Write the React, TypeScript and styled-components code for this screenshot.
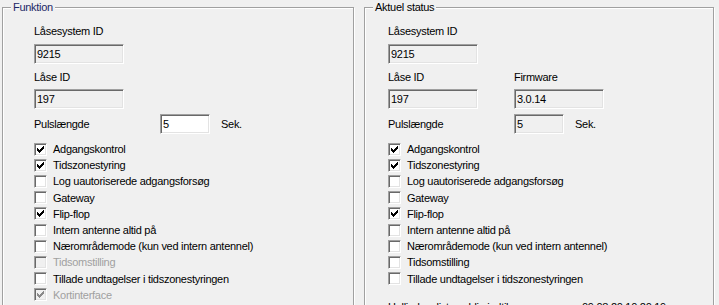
import React from 'react';
import styled, { createGlobalStyle } from 'styled-components';

const GlobalStyle = createGlobalStyle`
  body {
    margin: 0;
    background: #f0f0f0;
    font-family: "Liberation Sans", Arial, sans-serif;
    font-size: 11px;
    letter-spacing: -0.28px;
    color: #000;
    overflow: hidden;
  }
`;

const Page = styled.div`
  display: flex;
  gap: 10px;
  padding: 7px 0 0 2px;
`;

const Group = styled.section<{ $width: number; $pad: number }>`
  position: relative;
  width: ${p => p.$width}px;
  height: 330px;
  box-sizing: border-box;
  border: 1px solid #a0a0a0;
  box-shadow: inset 1px 1px 0 #fff, 1px 1px 0 #fff;
  padding: 17px 0 0 ${p => p.$pad}px;
`;

const Legend = styled.span<{ $color?: string }>`
  position: absolute;
  top: -7px;
  left: 8px;
  padding: 0 2px;
  line-height: 13px;
  background: #f0f0f0;
  color: ${p => p.$color || '#000'};
`;

const LabelRow = styled.div<{ $mt?: number }>`
  display: flex;
  height: 13px;
  line-height: 13px;
  margin-top: ${p => p.$mt || 0}px;
`;

const Label = styled.span`
  width: 126px;
  white-space: nowrap;
`;

const FieldRow = styled.div<{ $mt: number }>`
  display: flex;
  gap: 36px;
  margin-top: ${p => p.$mt}px;
`;

const TextField = styled.div<{ $width: number; $editable?: boolean }>`
  width: ${p => p.$width}px;
  height: 20px;
  box-sizing: border-box;
  border: 1px solid;
  border-color: #a0a0a0 #fff #fff #a0a0a0;
  box-shadow: inset 1px 1px 0 #696969, inset -1px -1px 0 #e3e3e3;
  background: ${p => (p.$editable ? '#fff' : '#f0f0f0')};
  padding: 0 2px;
  line-height: 18px;
`;

const PulseRow = styled.div`
  display: flex;
  align-items: center;
  margin-top: 5px;
`;

const Unit = styled.span`
  margin-left: 11px;
`;

const CheckList = styled.div`
  margin-top: 7px;
`;

const CheckRow = styled.div<{ $disabled?: boolean }>`
  display: flex;
  align-items: center;
  height: 16.2px;
  color: ${p => (p.$disabled ? '#a0a0a0' : '#000')};
`;

const Box = styled.span<{ $disabled?: boolean }>`
  display: flex;
  align-items: center;
  justify-content: center;
  width: 13px;
  height: 13px;
  box-sizing: border-box;
  border: 1px solid;
  border-color: #a0a0a0 #fff #fff #a0a0a0;
  box-shadow: inset 1px 1px 0 #696969, inset -1px -1px 0 #e3e3e3;
  background: ${p => (p.$disabled ? '#f0f0f0' : '#fff')};
  color: ${p => (p.$disabled ? '#8a8a8a' : '#000')};
`;

const CheckText = styled.span`
  margin-left: 6px;
  white-space: nowrap;
`;

const StatusRow = styled.div`
  display: flex;
  margin-top: 14px;
  line-height: 13px;
`;

const StatusLabel = styled.span`
  width: 194px;
`;

const Tick = () => (
  <svg width="7" height="7" viewBox="0 0 7 7" shapeRendering="crispEdges">
    <path
      fill="currentColor"
      d="M6 0h1v1h-1zM5 1h2v1h-2zM0 2h1v1h-1zM4 2h3v1h-3zM0 3h2v1h-2zM3 3h3v1h-3zM0 4h5v1h-5zM1 5h3v1h-3zM2 6h1v1h-1z"
    />
  </svg>
);

type Option = { text: string; checked?: boolean; disabled?: boolean };

const CheckBox = ({ text, checked, disabled }: Option) => (
  <CheckRow $disabled={disabled}>
    <Box $disabled={disabled}>{checked && <Tick />}</Box>
    <CheckText>{text}</CheckText>
  </CheckRow>
);

const leftOptions: Option[] = [
  { text: 'Adgangskontrol', checked: true },
  { text: 'Tidszonestyring', checked: true },
  { text: 'Log uautoriserede adgangsforsøg' },
  { text: 'Gateway' },
  { text: 'Flip-flop', checked: true },
  { text: 'Intern antenne altid på' },
  { text: 'Nærområdemode (kun ved intern antennel)' },
  { text: 'Tidsomstilling', disabled: true },
  { text: 'Tillade undtagelser i tidszonestyringen' },
  { text: 'Kortinterface', checked: true, disabled: true },
];

const rightOptions: Option[] = [
  { text: 'Adgangskontrol', checked: true },
  { text: 'Tidszonestyring', checked: true },
  { text: 'Log uautoriserede adgangsforsøg' },
  { text: 'Gateway' },
  { text: 'Flip-flop', checked: true },
  { text: 'Intern antenne altid på' },
  { text: 'Nærområdemode (kun ved intern antennel)' },
  { text: 'Tidsomstilling' },
  { text: 'Tillade undtagelser i tidszonestyringen' },
];

const App = () => (
  <>
    <GlobalStyle />
    <Page>
      <Group $width={352} $pad={31}>
        <Legend $color="#1c2766">Funktion</Legend>
        <LabelRow><Label>Låsesystem ID</Label></LabelRow>
        <FieldRow $mt={6}><TextField $width={90}>9215</TextField></FieldRow>
        <LabelRow $mt={7}><Label>Låse ID</Label></LabelRow>
        <FieldRow $mt={5}><TextField $width={90}>197</TextField></FieldRow>
        <PulseRow>
          <Label>Pulslængde</Label>
          <TextField $width={50} $editable>5</TextField>
          <Unit>Sek.</Unit>
        </PulseRow>
        <CheckList>
          {leftOptions.map(o => <CheckBox key={o.text} {...o} />)}
        </CheckList>
      </Group>
      <Group $width={350} $pad={23}>
        <Legend>Aktuel status</Legend>
        <LabelRow><Label>Låsesystem ID</Label></LabelRow>
        <FieldRow $mt={6}><TextField $width={90}>9215</TextField></FieldRow>
        <LabelRow $mt={7}><Label>Låse ID</Label><Label>Firmware</Label></LabelRow>
        <FieldRow $mt={5}>
          <TextField $width={90}>197</TextField>
          <TextField $width={90}>3.0.14</TextField>
        </FieldRow>
        <PulseRow>
          <Label>Pulslængde</Label>
          <TextField $width={50}>5</TextField>
          <Unit>Sek.</Unit>
        </PulseRow>
        <CheckList>
          {rightOptions.map(o => <CheckBox key={o.text} {...o} />)}
        </CheckList>
        <StatusRow>
          <StatusLabel>Helligdagsliste gyldig indtil</StatusLabel>
          <span>09.08.20 10:20:19</span>
        </StatusRow>
      </Group>
    </Page>
  </>
);

export default App;
